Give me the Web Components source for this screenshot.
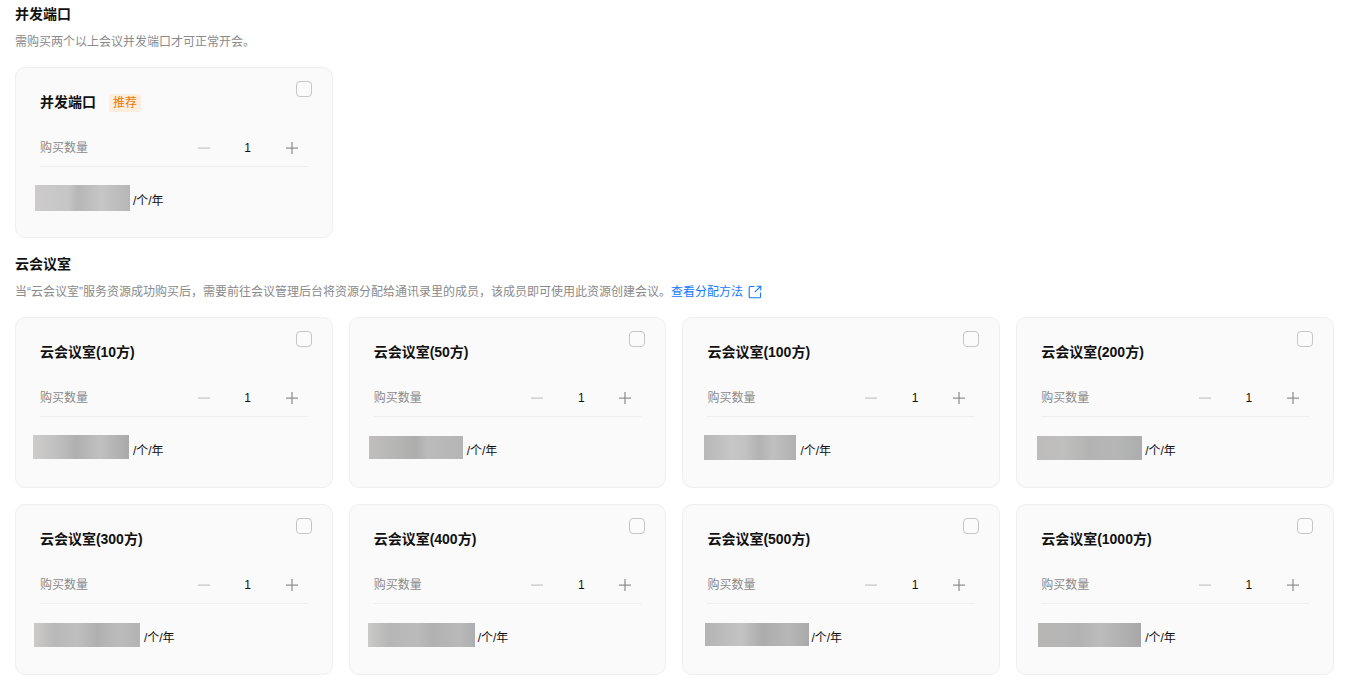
<!DOCTYPE html>
<html lang="zh"><head><meta charset="utf-8"><title>购买</title>
<style>
html,body{margin:0;padding:0;background:#fff}
body{font-family:"Liberation Sans","Noto Sans CJK SC",sans-serif;font-size:12px;color:#111;height:690px;overflow:hidden}
</style></head><body>
<buy-page>
  <buy-section heading="并发端口">
    <span slot="desc">需购买两个以上会议并发端口才可正常开会。</span>
    <buy-card name="并发端口" tag="推荐" mw="95" ml="-5" mh="26" mt="0" g="3" grad="#cdcbcb,#c6c6c6 35%,#b6b6b6 45%,#c6c6c6 70%,#b6b6b8"></buy-card>
  </buy-section>
  <buy-section heading="云会议室">
    <span slot="desc">当“云会议室”服务资源成功购买后，需要前往会议管理后台将资源分配给通讯录里的成员，该成员即可使用此资源创建会议。<ext-link>查看分配方法</ext-link></span>
    <buy-card name="云会议室(10方)" mw="96" ml="-7" mh="24" mt="0" g="4" grad="#cdcccb,#c0c0c0 25%,#b0b0b0 45%,#c0c0c0 70%,#a9a9a9"></buy-card>
    <buy-card name="云会议室(50方)" mw="94" ml="-5" mh="23" mt="1" g="4" grad="#bfbebc,#b5b5b4 30%,#adadad 50%,#bbbbbb 62%,#b5b5b5"></buy-card>
    <buy-card name="云会议室(100方)" mw="92" ml="-3" mh="25" mt="0" g="4" grad="#b8b8b8,#c6c6c6 30%,#c2c2c2 45%,#b2b2b2 60%,#c0c0c0 75%,#b0b0b0"></buy-card>
    <buy-card name="云会议室(200方)" mw="105" ml="-4" mh="24" mt="1" g="3" grad="#bdbcba,#bfbfbd 25%,#b3b3b3 50%,#b6b6b6 75%,#acadaf"></buy-card>
    <buy-card name="云会议室(300方)" mw="106" ml="-6" mh="24" mt="1" g="4" grad="#cbcac9,#b8b8b8 20%,#bfbfbf 40%,#b0b0b0 60%,#bcbcbc 80%,#b3b3b3"></buy-card>
    <buy-card name="云会议室(400方)" mw="107" ml="-6" mh="24" mt="1" g="3" grad="#cbcac8,#b6b6b6 20%,#bbbbbb 45%,#b1b1b1 60%,#b9b9b9 85%,#adaeb0"></buy-card>
    <buy-card name="云会议室(500方)" mw="104" ml="-2" mh="23" mt="1" g="2" grad="#b4b4b4,#c3c3c3 35%,#acacac 55%,#b7b7b7 80%,#aaaaaa"></buy-card>
    <buy-card name="云会议室(1000方)" mw="103" ml="-3" mh="24" mt="1" g="4" grad="#b8b6b3,#b6b6b6 25%,#b2b2b2 40%,#bcbcbc 60%,#a8a8aa"></buy-card>
  </buy-section>
</buy-page>
<script>
function def(name, css, html){
  customElements.define(name, class extends HTMLElement{
    connectedCallback(){
      if(this.shadowRoot) return;
      const r=this.attachShadow({mode:'open'});
      const a=n=>this.getAttribute(n)||'';
      r.innerHTML='<style>'+css+'</style>'+(typeof html==='function'?html(a):html);
    }
  });
}
def('buy-page',':host{display:flex;flex-direction:column;gap:12px;padding:0 16.1px 0 14.9px}','<slot></slot>');
def('buy-section',
 ':host{display:block}h2{margin:0;font-size:14px;font-weight:700;line-height:20px;padding-top:4px;color:#111}.d{font-size:12px;line-height:20px;color:#8a8a8a;margin-top:8px}.g{display:grid;grid-template-columns:repeat(4,1fr);gap:16px;margin-top:15px}',
 a=>'<h2>'+a('heading')+'</h2><div class="d"><slot name="desc"></slot></div><div class="g"><slot></slot></div>');
def('ext-link',
 ':host{color:#1677ff;display:inline-flex;align-items:center;gap:5px;vertical-align:top}svg{display:block}',
 '<slot></slot><svg width="14" height="14" viewBox="0 0 14 14" fill="none" stroke="#1677ff" stroke-width="1.1"><path d="M6.5 1.5H2.2a1 1 0 0 0-1 1v9.3a1 1 0 0 0 1 1h9.3a1 1 0 0 0 1-1V7.5"/><path d="M8.6 1.2h4.2v4.2M12.6 1.4 6.8 7.2"/></svg>');
def('rec-tag',
 ':host{display:inline-block;background:#ffeedd;color:#e8780a;font-size:12px;line-height:18px;height:18px;padding:0 4px;border-radius:2px;margin-top:4px}',
 '<slot></slot>');
def('check-box',
 ':host{display:block;box-sizing:border-box;width:16px;height:16px;border:1px solid #c6c6c6;border-radius:4px;background:#fbfbfb}','');
def('qty-stepper',
 ':host{display:flex;align-items:center;width:100px;justify-content:space-between;color:#111;font-size:12px}svg{display:block}',
 '<svg width="12" height="12" viewBox="0 0 12 12"><rect x="0" y="5.5" width="12" height="1.2" fill="#c4c4c4"/></svg><span>1</span><svg width="12" height="12" viewBox="0 0 12 12"><rect x="0" y="5.5" width="12" height="1.2" fill="#8c8c8c"/><rect x="5.4" y="0" width="1.2" height="12" fill="#8c8c8c"/></svg>');
def('price-mask',':host{display:block;flex:none}','');
def('buy-card',
 ':host{display:block;position:relative;box-sizing:border-box;height:171px;background:#fafafa;border:1px solid #efefef;border-radius:10px;padding:23px 24px 0}'+
 '.t{display:flex;align-items:center;gap:13px;height:20px;font-size:14px;font-weight:700;color:#111}'+
 '.cb{position:absolute;top:13px;right:20px}'+
 '.q{display:flex;justify-content:space-between;align-items:center;height:37px;margin-top:18px;border-bottom:1px solid #eeeeee;color:#8a8a8a;font-size:12px;padding-right:10px}'+
 '.q>span{padding-bottom:2px}'+
 '.p{display:flex;align-items:flex-start;height:26px;margin-top:18px;font-size:12px;color:#111}'+
 '.p span{line-height:26px;padding-top:3px}',
 a=>'<div class="t"><span>'+a('name')+'</span>'+(a('tag')?'<rec-tag style="font-weight:400">'+a('tag')+'</rec-tag>':'')+'</div>'+
    '<check-box class="cb"></check-box>'+
    '<div class="q"><span>购买数量</span><qty-stepper></qty-stepper></div>'+
    '<div class="p"><price-mask style="width:'+a('mw')+'px;height:'+a('mh')+'px;margin-left:'+a('ml')+'px;margin-top:'+a('mt')+'px;margin-right:'+a('g')+'px;background:linear-gradient(90deg,'+a('grad')+')"></price-mask><span>/个/年</span></div>');
</script>
</body></html>
